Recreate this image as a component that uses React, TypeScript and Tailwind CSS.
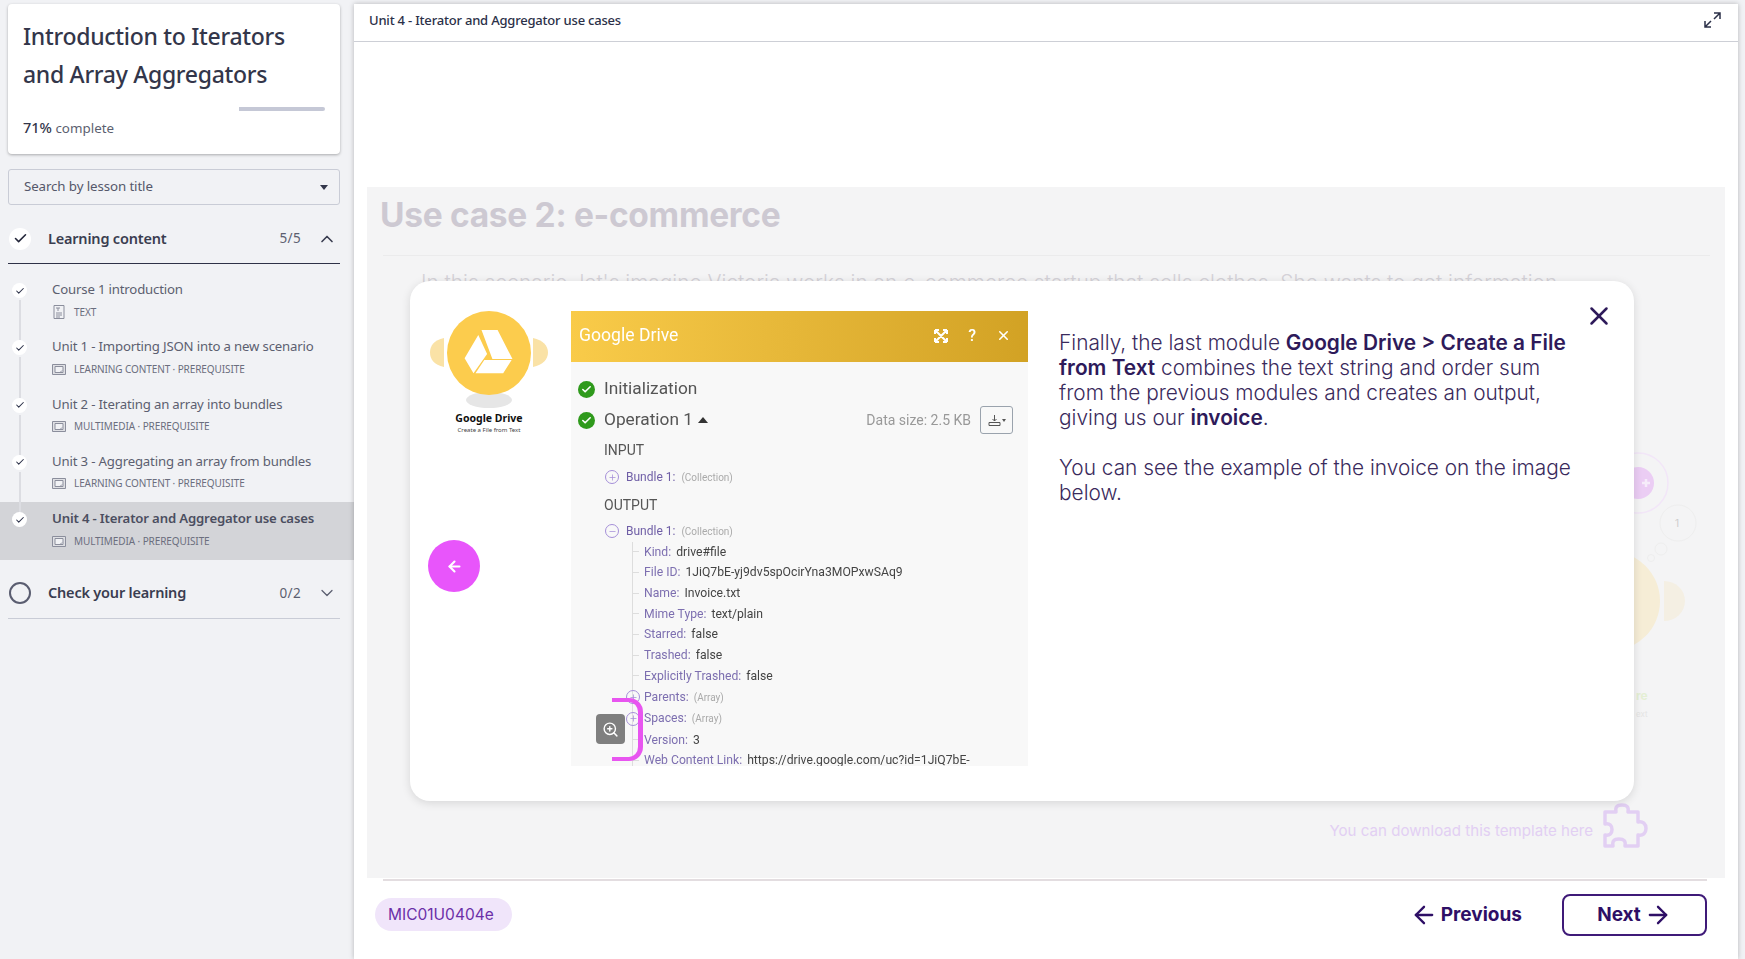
import React from "react";
import { ArrowLeft, ArrowRight, Check, ChevronDown, ChevronUp, Minus, Plus, X, ZoomIn } from "lucide-react";

const lessons = [
  { title: "Course 1 introduction", meta: "TEXT", text: true },
  { title: "Unit 1 - Importing JSON into a new scenario", meta: "LEARNING CONTENT · PREREQUISITE" },
  { title: "Unit 2 - Iterating an array into bundles", meta: "MULTIMEDIA · PREREQUISITE" },
  { title: "Unit 3 - Aggregating an array from bundles", meta: "LEARNING CONTENT · PREREQUISITE" },
  { title: "Unit 4 - Iterator and Aggregator use cases", meta: "MULTIMEDIA · PREREQUISITE", active: true },
];

const fields = [
  ["Kind:", "drive#file"],
  ["File ID:", "1JiQ7bE-yj9dv5spOcirYna3MOPxwSAq9"],
  ["Name:", "Invoice.txt"],
  ["Mime Type:", "text/plain"],
  ["Starred:", "false"],
  ["Trashed:", "false"],
  ["Explicitly Trashed:", "false"],
];

const TextIcon = () => (
  <svg width="12" height="14" viewBox="0 0 12 14" fill="none" stroke="#8b8e9c" strokeWidth="1">
    <path d="M1 .5h10v13H1zM3 3h4M5 3v3M3 8h6M3 10h6M3 12h4" />
  </svg>
);

const SlidesIcon = () => (
  <svg width="14" height="11" viewBox="0 0 14 11" fill="none" stroke="#8b8e9c" strokeWidth="1">
    <path d="M.5.5h13v10H.5z" fill="#dfe0e4" />
    <path d="M3 2.5h8v6H3zM8 8.5l2-2" fill="#f1f2f5" />
  </svg>
);

const ExpandIcon = () => (
  <svg width="17" height="16" viewBox="0 0 17 16" fill="none" stroke="#2b3048" strokeWidth="1.5" className="-mt-[2px]">
    <path d="M10 1h6v6M16 1l-6 6M1 9v6h6M1 15l6-6" />
  </svg>
);

const PuzzleIcon = () => (
  <svg width="46" height="46" viewBox="0 0 46 46" fill="none" stroke="#e2cff3" strokeWidth="3.5" strokeLinejoin="round">
    <path d="M3 9H14C13 4 15 2 20 2C25 2 27 4 26 9H36V19C41 18 44 21 44 25.5C44 30 41 33 36 32V43H23C24 38 22 36 17 36C12 36 10 38 11 43H3V32C8 33 10 30 10 26.5C10 23 8 20 3 21Z" />
  </svg>
);

const DriveLogo = () => (
  <svg width="120" height="98" viewBox="0 0 120 98" className="block">
    <ellipse cx="60" cy="89" rx="23" ry="8" fill="#e6e6e6" />
    <path d="M15 27C5 29 1 35 1 41.5S5 54 15 56Z" fill="#fae2a6" />
    <path d="M104 27C114 29 119 35 119 41.5S114 54 104 56Z" fill="#fae2a6" />
    <circle cx="60" cy="42" r="42" fill="#fccc4d" />
    <path d="M52.5 19H68.6L83.5 48H63.4Z M49.3 24L58.1 43L44.5 62.3L35.6 47.3Z M55.3 49H82.6L74.2 62.3H46.5Z" fill="#fff" />
  </svg>
);

const Lesson = ({ title, meta, text, active, first, last }: any) => (
  <div className={`flex h-[57.33px] pl-3 ${active ? "bg-[#d3d4d8]" : ""}`}>
    <div className="flex w-[15px] flex-col items-center">
      <div className={`h-[10px] w-0.5 ${first ? "" : "bg-[#dcdde2]"}`} />
      <div className="flex size-[15px] shrink-0 items-center justify-center rounded-full bg-white">
        <Check size={10} strokeWidth={2.5} className="text-[#2b3048]" />
      </div>
      {!last && <div className="mt-0.5 w-0.5 flex-1 bg-[#dcdde2]" />}
    </div>
    <div className="ml-[25px] pt-[6px]">
      <p className={`text-[13.2px] leading-5 tracking-[-0.17px] ${active ? "font-semibold text-[#4b4e60]" : "text-[#5c5f70]"}`}>{title}</p>
      <div className="mt-[3px] flex h-5 items-center gap-[8px]">
        <div className="flex w-3.5 justify-center">{text ? <TextIcon /> : <SlidesIcon />}</div>
        <span className="text-[10px] tracking-[-0.1px] text-[#6b6e7e]">{meta}</span>
      </div>
    </div>
  </div>
);

const SectionHeader = ({ label, count, done }: any) => (
  <div className={`flex h-[50px] items-center border-b pl-px pr-[3px] ${done ? "border-[#2f3247]" : "border-[#c9ccd6]"}`}>
    {done ? (
      <div className="flex size-[22px] items-center justify-center rounded-full bg-white">
        <Check size={15} strokeWidth={2.5} className="text-[#23263a]" />
      </div>
    ) : (
      <div className="size-[22px] rounded-full border-2 border-[#5a5d70]" />
    )}
    <span className="ml-[17px] flex-1 text-[14.5px] font-semibold tracking-[-0.2px] text-[#3a3d50]">{label}</span>
    <span className="text-[13.5px] tracking-wide text-[#5c5f70]">{count}</span>
    {done ? (
      <ChevronUp size={20} className="ml-[16px] text-[#3a3d50]" />
    ) : (
      <ChevronDown size={20} strokeWidth={1.5} className="ml-[16px] text-[#5c5f70]" />
    )}
  </div>
);

const Sidebar = () => (
  <aside className="flex w-[354px] shrink-0 flex-col font-['Noto_Sans',sans-serif]">
    <div className="ml-2 mr-[14px] mt-1 h-[150px] rounded bg-white px-[15px] pt-[13px] shadow-[0_1px_3px_rgba(0,0,0,0.3)]">
      <h1 className="text-[23px] font-medium leading-[38px] tracking-[-0.3px] text-[#33364a]">
        Introduction to Iterators
        <br />
        and Array Aggregators
      </h1>
      <div className="mt-[14px] h-1 rounded-sm bg-linear-to-r from-white from-[71.5%] to-[#c5c8d6] to-[71.5%]" />
      <p className="mt-[6px] text-[13.4px] leading-5 text-[#5c5f70]">
        <span className="text-[14.5px] font-medium text-[#33364a]">71%</span> complete
      </p>
    </div>
    <div className="ml-2 mr-[14px] mt-[15px] flex h-[36px] items-center justify-between rounded-[3px] border border-[#c9ccd6] pl-[15px] pr-[11px] text-[13.3px] tracking-[-0.1px] text-[#55586a]">
      Search by lesson title
      <span className="border-x-4 border-t-[5px] border-x-transparent border-t-[#33364a]" />
    </div>
    <div className="ml-2 mr-[14px] mt-[9px]">
      <SectionHeader label="Learning content" count="5/5" done />
    </div>
    <div className="mt-[9px]">
      {lessons.map((l, i) => (
        <Lesson key={l.title} {...l} first={i === 0} last={i === lessons.length - 1} />
      ))}
    </div>
    <div className="ml-2 mr-[14px] mt-[9px]">
      <SectionHeader label="Check your learning" count="0/2" />
    </div>
  </aside>
);

const DriveOutput = () => (
  <div className="relative h-[455px] w-[457px] shrink-0 overflow-hidden bg-[#f8f8f8] font-['Roboto',sans-serif] blur-[0.35px]">
    <div className="flex h-[51px] items-center bg-linear-to-r from-[#f9cb49] to-[#d2a224] pb-[2px] pl-2 pr-[17px] text-white">
      <span className="flex-1 text-[17.6px]">Google Drive</span>
      <svg width="14" height="14" viewBox="0 0 14 14" fill="none" stroke="#fff" strokeWidth="2" className="mr-5">
        <path d="M1 1h4M1 1v4M13 1H9M13 1v4M1 13h4M1 13V9M13 13H9M13 13V9M2 2l10 10M12 2 2 12" />
      </svg>
      <span className="mr-5 text-[16px] font-medium">?</span>
      <X size={15} strokeWidth={2.5} />
    </div>
    <div className="pl-[7px] pt-[11.5px] text-[#555]">
      <div className="flex h-[31px] items-center gap-[9px] text-[17.3px]">
        <span className="flex size-[17px] items-center justify-center rounded-full bg-[#2f9a1c]">
          <Check size={11} strokeWidth={3.5} className="text-white" />
        </span>
        Initialization
      </div>
      <div className="flex h-[31px] items-center gap-[9px] pr-[15px] text-[17.3px]">
        <span className="flex size-[17px] items-center justify-center rounded-full bg-[#2f9a1c]">
          <Check size={11} strokeWidth={3.5} className="text-white" />
        </span>
        Operation 1
        <span className="-ml-1 border-x-[5px] border-b-[6px] border-x-transparent border-b-[#333]" />
        <span className="ml-auto text-[14px] text-[#999]">Data size: 2.5 KB</span>
        <span className="flex h-7 w-[33px] items-center justify-center gap-px rounded-[3px] border border-[#9aa3ad]">
          <svg width="13" height="13" viewBox="0 0 13 13" fill="none" stroke="#555" strokeWidth="1">
            <path d="M6.5 1v6M4.5 5l2 2 2-2M1 8.5h11v3H1z" />
          </svg>
          <span className="border-x-[2.5px] border-t-[3px] border-x-transparent border-t-[#555]" />
        </span>
      </div>
      <div className="flex h-[29px] items-center pl-[26px] text-[14px]">INPUT</div>
      <div className="flex h-[25px] items-center pl-[27px] text-[12px]">
        <span className="flex size-[14px] items-center justify-center rounded-full border border-[#a58fd8] text-[#a58fd8]">
          <Plus size={9} />
        </span>
        <span className="ml-[7px] text-[#6f5ea6]">Bundle 1:</span>
        <span className="ml-1.5 text-[10px] text-[#aaa]">(Collection)</span>
      </div>
      <div className="flex h-[31px] items-center pl-[26px] text-[14px]">OUTPUT</div>
      <div className="flex h-[21px] items-center pl-[27px] text-[12px]">
        <span className="flex size-[14px] items-center justify-center rounded-full border border-[#a58fd8] text-[#a58fd8]">
          <Minus size={9} />
        </span>
        <span className="ml-[7px] text-[#6f5ea6]">Bundle 1:</span>
        <span className="ml-1.5 text-[10px] text-[#aaa]">(Collection)</span>
      </div>
      <div className="ml-[54px] border-l border-[#ddd] text-[12.2px]">
        {fields.map(([k, v]) => (
          <div key={k} className="flex h-[20.7px] items-center">
            <span className="mr-[5px] h-px w-[6px] bg-[#ddd]" />
            <span className="text-[#7d6fb0]">{k}</span>
            <span className="ml-[5px] text-[#444]">{v}</span>
          </div>
        ))}
        {["Parents:", "Spaces:"].map((k) => (
          <div key={k} className="relative flex h-[21.5px] items-center pl-[11px]">
            <span className="absolute -left-[7px] flex size-[14px] items-center justify-center rounded-full border border-[#a58fd8] text-[#a58fd8]">
              <Plus size={9} />
            </span>
            <span className="text-[#7d6fb0]">{k}</span>
            <span className="ml-[5px] text-[10px] text-[#aaa]">(Array)</span>
          </div>
        ))}
        <div className="flex h-[20.7px] items-center">
          <span className="mr-[5px] h-px w-[6px] bg-[#ddd]" />
          <span className="text-[#7d6fb0]">Version:</span>
          <span className="ml-[5px] text-[#444]">3</span>
        </div>
        <div className="flex h-[20.7px] items-center">
          <span className="mr-[5px] h-px w-[6px] bg-[#ddd]" />
          <span className="text-[#7d6fb0]">Web Content Link:</span>
          <span className="ml-[5px] text-[#444]">https://drive.google.com/uc?id=1JiQ7bE-</span>
        </div>
      </div>
    </div>
    <div className="absolute left-[41px] top-[387px] h-[63px] w-[31px] rounded-r-[14px] border-y-4 border-r-[5px] border-[#e855f0]" />
    <div className="absolute left-[25px] top-[403px] flex h-[30px] w-[29px] items-center justify-center rounded-[4px] bg-[#7f7f7f]">
      <ZoomIn size={17} className="text-white" />
    </div>
  </div>
);

const Modal = () => (
  <div className="absolute left-[43px] top-[94px] flex h-[520px] w-[1224px] rounded-[20px] bg-white pt-[30px] shadow-[0_2px_10px_rgba(0,0,0,0.12)]">
    <div className="w-[161px] shrink-0 pl-[19px]">
      <DriveLogo />
      <div className="w-[120px] text-center font-['Noto_Sans',sans-serif] text-[#111]">
        <p className="mt-[2px] text-[10.5px] font-bold leading-[14px]">Google Drive</p>
        <p className="text-[6px] leading-[11px] text-[#444]">Create a File from Text</p>
      </div>
      <button className="-ml-px mt-[104px] flex size-[52px] items-center justify-center rounded-full bg-[#e855fb] text-white">
        <ArrowLeft size={17} strokeWidth={3} />
      </button>
    </div>
    <DriveOutput />
    <div className="ml-[31px] w-[518px] pt-[19px] font-['Inter',sans-serif] text-[20.85px] font-light leading-[25px] text-[#3a2a5c]">
      <p>
        Finally, the last module <b className="font-semibold text-[#2e1a5a]">Google Drive &gt; Create a File from Text</b> combines the text string and order sum from the previous modules and creates an output, giving us our <b className="font-semibold text-[#2e1a5a]">invoice</b>.
      </p>
      <p className="mt-[25px]">You can see the example of the invoice on the image below.</p>
    </div>
    <button className="absolute right-[20px] top-[20px] text-[#2e1a5a]">
      <X size={30} strokeWidth={2} />
    </button>
  </div>
);

const FadedCanvas = () => (
  <svg width="70" height="290" viewBox="0 0 70 290" fill="none" className="absolute right-[21px] top-[258px]">
    <circle cx="4" cy="38" r="30" stroke="#f2e6f8" strokeWidth="1.5" />
    <circle cx="4" cy="38" r="16" fill="#ebcdf4" />
    <path d="M8 38h8M12 34v8" stroke="#f6ecfa" strokeWidth="2.5" />
    <circle cx="44" cy="78" r="18" stroke="#eeeeee" />
    <text x="41" y="82" fontSize="10" fill="#ccc" fontFamily="Inter">1</text>
    <circle cx="27" cy="104" r="6" stroke="#eeeeee" />
    <circle cx="17" cy="113" r="3.5" stroke="#eeeeee" />
    <circle cx="-24" cy="156" r="50" fill="#f6edd6" />
    <path d="M30 136a21 20 0 0 1 0 40z" fill="#f4efe3" />
    <text x="2" y="255" fontSize="12" fill="#e4efd4" fontFamily="Inter" fontWeight="700">re</text>
    <text x="2" y="272" fontSize="8" fill="#e4e4e4" fontFamily="Inter">ext</text>
  </svg>
);

const Lesson4Panel = () => (
  <div className="relative mx-[13px] mt-[145px] flex h-[691px] flex-col overflow-hidden bg-[#f4f4f5] font-['Inter',sans-serif]">
    <h2 className="ml-[13px] mt-[7px] text-[33.5px] font-bold leading-[42px] tracking-[-0.3px] text-[#cdc9d2]">Use case 2: e-commerce</h2>
    <div className="ml-4 mr-[15px] mt-[19px] h-px bg-[#ebebec]" />
    <p className="ml-[54px] mt-[14px] whitespace-nowrap text-[20.85px] font-light leading-[25px] text-[#d4d2d8]">
      In this scenario, let's imagine Victoria works in an e-commerce startup that sells clothes. She wants to get information
    </p>
    <FadedCanvas />
    <div className="absolute bottom-[29px] right-[77px] flex items-center gap-[9px] text-[15.1px] text-[#e2cff3]">
      <span className="mt-[11px]">You can download this template here</span>
      <PuzzleIcon />
    </div>
    <Modal />
  </div>
);

export default function App() {
  return (
    <div className="flex h-screen overflow-hidden bg-[#f1f2f5]">
      <Sidebar />
      <main className="mb-0 mr-[7px] mt-1 flex flex-1 flex-col bg-white shadow-[0_0_5px_rgba(0,0,0,0.25)]">
        <header className="flex h-[38px] shrink-0 items-center justify-between border-b border-[#cdcfd6] pb-[3px] pl-[15px] pr-[17px] font-['Noto_Sans',sans-serif] text-[13px] font-medium tracking-[-0.2px] text-[#2b3048]">
          Unit 4 - Iterator and Aggregator use cases
          <ExpandIcon />
        </header>
        <Lesson4Panel />
        <div className="ml-[29px] mr-[31px] mt-px h-0.5 bg-[#e3dde0]" />
        <footer className="flex flex-1 items-start justify-between pl-[21px] pr-[31px] pt-[13px] font-['Inter',sans-serif]">
          <span className="mt-[4px] flex h-[33px] w-[137px] items-center rounded-full bg-[#f0e5fa] pl-[13px] text-[15.5px] text-[#6b2fa8]">MIC01U0404e</span>
          <div className="flex items-center gap-10 text-[19px] font-bold text-[#2e0f66]">
            <button className="flex items-center gap-[3px]">
              <ArrowLeft size={28} strokeWidth={2} />
              Previous
            </button>
            <button className="flex h-[42px] w-[145px] items-center justify-center gap-[3px] rounded-lg border-2 border-[#3f1a78]">
              Next
              <ArrowRight size={28} strokeWidth={2} />
            </button>
          </div>
        </footer>
      </main>
    </div>
  );
}
